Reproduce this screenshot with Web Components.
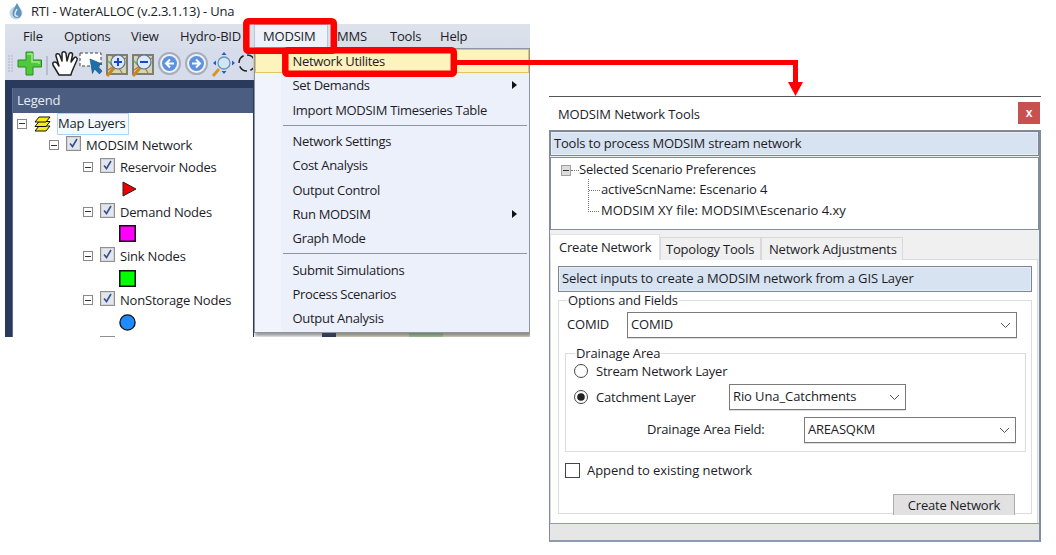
<!DOCTYPE html>
<html>
<head>
<meta charset="utf-8">
<title>RTI - WaterALLOC</title>
<style>
  html, body { margin: 0; background: #fff; }
  body { font: 13px "Open Sans", "Noto Sans", sans-serif; letter-spacing: -.2px; color: #1c1c28; }
  .desk { position: relative; width: 1056px; height: 555px; overflow: hidden; }
</style>
</head>
<body>
<div class="desk">
  <app-window></app-window>
  <tool-window></tool-window>
  <call-outs></call-outs>
</div>

<script>
/* small helper so each component only has to give its css and markup */
class Base extends HTMLElement {
  constructor(css, html) {
    super();
    const template = document.createElement('template');
    template.innerHTML = `<style>*{box-sizing:border-box}${css}</style>${html}`;
    this.attachShadow({ mode: 'open' }).appendChild(template.content.cloneNode(true));
  }
}

class MenuItem extends Base {
  constructor() {
    super(`
      :host { display:flex; align-items:center; height:24.3px; padding-left:38px; position:relative; white-space:nowrap; letter-spacing:-.3px; }
      :host([hot]) { background:#fdf3bd; outline:1px solid #e5c365; outline-offset:-1px; }
      :host([sub])::after { content:""; position:absolute; left:257px; top:8px; border-left:5px solid #111; border-top:4.5px solid transparent; border-bottom:4.5px solid transparent; }
    `, `<slot></slot>`);
  }
}
customElements.define('menu-item', MenuItem);

class MenuSep extends Base {
  constructor() {
    super(`:host { display:block; height:1px; margin:3px 2px 3px 28px; background:#8d95a3; }`, ``);
  }
}
customElements.define('menu-sep', MenuSep);

class TreeRow extends Base {
  constructor() {
    super(`
      :host { display:flex; align-items:center; height:22.2px; white-space:nowrap; position:relative; }
      .box { width:10px; height:10px; border:1px solid #888; background:#fff; position:relative; flex:none; }
      .box::after { content:""; position:absolute; left:1px; right:1px; top:3.5px; height:1px; background:#333; }
      .chk { width:15px; height:15px; flex:none; margin-left:7px; margin-right:5px; margin-top:-3px; }
    `, `<span class="box"></span>
      <svg class="chk" viewBox="0 0 15 15"><rect x=".5" y=".5" width="14" height="14" fill="#d5d5d8" stroke="#8f8f8f"/><rect x="2" y="2" width="11" height="11" fill="#e4e6ee"/><path d="M4 7.500l2.500 3L11 3" fill="none" stroke="#34508c" stroke-width="1.600"/></svg>
      <slot></slot>`);
  }
  connectedCallback() {
    this.style.paddingLeft = (this.getAttribute('indent') || 0) + 'px';
  }
}
customElements.define('tree-row', TreeRow);

class AppWindow extends Base {
  constructor() {
    super(`
      :host { position:absolute; left:0; top:0; width:530px; height:337px; display:flex; flex-direction:column; overflow:hidden; }
      .title { height:24px; display:flex; align-items:center; background:#fff; padding:0 0 2px 9px; gap:7px; white-space:nowrap; }
      .frame { flex:1; margin-left:5px; display:flex; flex-direction:column; position:relative; min-height:0; }
      .menubar { height:24px; display:flex; align-items:center; background:linear-gradient(#dde2eb,#d8deea); }
      .menubar span { white-space:nowrap; }
      .tools { height:32px; background:#d6dce9; display:flex; align-items:center; overflow:hidden; }
      .tools svg { display:block; flex:none; }
      .dark { flex:1; background:#2a3a5c; padding:8px 0 0 7px; min-height:0; }
      .legend { width:241px; height:100%; display:flex; flex-direction:column; background:#fff; border-left:1px solid #5b6c8c; }
      .lhead { height:25px; background:#4b5d80; color:#e8ecf4; display:flex; align-items:center; padding:0 0 2px 4px; flex:none; }
      .ltree { flex:1; overflow:hidden; }
      .row { display:flex; align-items:center; height:22.2px; position:relative; }
      .root { display:flex; align-items:center; height:21px; padding-left:4px; }
      .minus { width:10px; height:10px; border:1px solid #888; position:relative; flex:none; }
      .minus::after { content:""; position:absolute; left:1px; right:1px; top:3.5px; height:1px; background:#333; }
      .sel { margin-left:6px; border:1px solid #a8d8f4; background:#f2fafe; padding:0 0 1px 0; height:22px; display:flex; align-items:center; width:72px; white-space:nowrap; flex:none; }
      .sym { display:block; }
      .menu { position:absolute; left:248.5px; top:24px; width:276.5px; height:285px; border:1px solid #8d95a3; background:linear-gradient(90deg,#f1f4fd 26px,#ecf0fb 26px); box-shadow:1px 3px 3px rgba(70,70,70,.55); }
      .map { position:absolute; left:330px; top:309px; width:195px; height:4px; background:#e6dcc6; border-left:1px solid #333; }
      .map i { position:absolute; left:73px; top:0; width:34px; height:4px; background:#a8cfa0; }
      .stub { position:absolute; left:317px; top:309px; width:8px; height:4px; background:#2a3a5c; }
      .fill { position:absolute; left:248px; top:56px; width:277px; height:253px; background:#2a3a5c; }
      .blank { position:absolute; left:249px; top:309px; width:68px; height:4px; background:#fff; }
    `, `
      <div class="title">
        <svg width="15" height="17" viewBox="0 0 15 17"><circle cx="7" cy="10" r="6.500" fill="#c4d6e6"/><path d="M8 0C6 4 3.500 7 3.500 10.500a4.500 4.500 0 0 0 9 0C12.500 7 10 4 8 0z" fill="#5f93c0"/><path d="M8 6c-1 2-2 3-2 5a2 2 0 0 0 3 2" fill="none" stroke="#e4eef6" stroke-width="1.400"/></svg>
        <span>RTI - WaterALLOC (v.2.3.1.13) - Una</span>
      </div>
      <div class="frame">
        <div class="menubar">
          <span style="margin-left:18px;width:41px">File</span>
          <span style="width:67px">Options</span>
          <span style="width:49px">View</span>
          <span style="width:74px">Hydro-BID</span>
          <span style="width:74px;height:24px;line-height:24px;padding-left:9px;background:#eef3fb;outline:1px solid #b8c6dc;outline-offset:-1px">MODSIM</span>
          <span style="margin-left:9px;width:53px">MMS</span>
          <span style="width:50px">Tools</span>
          <span>Help</span>
        </div>
        <div class="tools">
          <svg width="248" height="32" viewBox="0 0 248 32">
            <g fill="#a9aeb8"><circle cx="4" cy="8" r=".8"/><circle cx="7" cy="8" r=".8"/><circle cx="4" cy="11" r=".8"/><circle cx="7" cy="11" r=".8"/><circle cx="4" cy="14" r=".8"/><circle cx="7" cy="14" r=".8"/><circle cx="4" cy="17" r=".8"/><circle cx="7" cy="17" r=".8"/><circle cx="4" cy="20" r=".8"/><circle cx="7" cy="20" r=".8"/><circle cx="4" cy="23" r=".8"/><circle cx="7" cy="23" r=".8"/></g>
            <path d="M21 4h7v8h8.500v7H28v8h-7v-8h-8v-7h8z" fill="#4fc83a" stroke="#2a8a24" stroke-width="1" stroke-linejoin="round"/>
            <path d="M22 6h5v8h7v2" fill="none" stroke="#a4ec8c" stroke-width="1.500"/>
            <path d="M42 8v19" stroke="#98a0ad"/>
            <path d="M54 27L48 17C47 14 50 13 52 15L54 18L51 8C50.500 5 54 5 55 7.500L57 13L57 5.500C57 3 60.500 3 61 5.500L62 13L64 6C64.500 4 68 4.500 67.500 7L66 14L69 10C70 8 73 9.500 72 12L68 21C67 24 66 25 66 27Z" fill="#fff" stroke="#222" stroke-width="1.500" stroke-linejoin="round"/>
            <rect x="75" y="5" width="21" height="13" fill="#fff"/>
            <rect x="75" y="5" width="21" height="13" fill="none" stroke="#444" stroke-dasharray="3 2"/>
            <path d="M85 11l12 5-4.500 2 4.500 5-2.500 3-5-5-2 4.500z" fill="#1e6fae" stroke="#0f4a80" stroke-width=".6"/>
            <rect x="101" y="6" width="22" height="21" fill="#7a7f78"/><rect x="103" y="8" width="18" height="17" fill="#d6d6a8"/>
            <path d="M103 22l18-12M107 8l10 17" stroke="#c86a58" stroke-width="1.200"/><path d="M103 13l6 6" stroke="#6fae60" stroke-width="1.500"/>
            <path d="M102 28l7-8" stroke="#c8861e" stroke-width="3"/>
            <circle cx="113" cy="14" r="7" fill="#dbe9fb" stroke="#5a7290" stroke-width="1.200"/><path d="M109 14h8M113 10v8" stroke="#1c46c4" stroke-width="2"/>
            <rect x="127" y="6" width="22" height="21" fill="#7a7f78"/><rect x="129" y="8" width="18" height="17" fill="#d6d6a8"/>
            <path d="M129 22l18-12M133 8l10 17" stroke="#c86a58" stroke-width="1.200"/><path d="M129 13l6 6" stroke="#6fae60" stroke-width="1.500"/>
            <path d="M128 28l7-8" stroke="#c8861e" stroke-width="3"/>
            <circle cx="139" cy="14" r="7" fill="#dbe9fb" stroke="#5a7290" stroke-width="1.200"/><path d="M135 14h8" stroke="#1c46c4" stroke-width="2"/>
            <circle cx="164.500" cy="15.500" r="10.500" fill="#eef1f6" stroke="#a6aebb" stroke-width="2"/><circle cx="164.500" cy="15.500" r="7.500" fill="#5f92dd"/>
            <path d="M169 15.500h-7M165 11.500l-4 4 4 4" fill="none" stroke="#fff" stroke-width="2"/>
            <circle cx="191.500" cy="15.500" r="10.500" fill="#eef1f6" stroke="#a6aebb" stroke-width="2"/><circle cx="191.500" cy="15.500" r="7.500" fill="#5f92dd"/>
            <path d="M187 15.500h7M191 11.500l4 4-4 4" fill="none" stroke="#fff" stroke-width="2"/>
            <path d="M208 28l6-7" stroke="#d8962a" stroke-width="3"/>
            <circle cx="219" cy="15" r="6" fill="#cfe6f6" stroke="#6f94b4" stroke-width="1.300"/>
            <path d="M219 4l-2.500 3h5zM219 26l-2.500-3h5zM208 15l3-2.500v5zM230 15l-3-2.500v5z" fill="#1c5fd0"/>
            <circle cx="242" cy="15" r="8" fill="none" stroke="#222" stroke-width="1.500" stroke-dasharray="9 3.500"/>
          </svg>
        </div>
        <div class="dark">
          <div class="legend">
            <div class="lhead">Legend</div>
            <div class="ltree">
              <div class="root">
                <span class="minus"></span>
                <svg style="margin-left:7px;flex:none" width="17" height="18" viewBox="0 0 17 18">
                  <path d="M1 16h11l4-5H5z" fill="#f6ee18" stroke="#111" stroke-linejoin="round"/>
                  <path d="M1 11.500h11l4-5H5z" fill="#f6ee18" stroke="#111" stroke-linejoin="round"/>
                  <path d="M1 7h11l4-5H5z" fill="#f6ee18" stroke="#111" stroke-linejoin="round"/>
                </svg>
                <span class="sel">Map Layers</span>
              </div>
              <tree-row indent="36">MODSIM Network</tree-row>
              <tree-row indent="70">Reservoir Nodes</tree-row>
              <div class="row" style="padding-left:109px"><svg class="sym" width="15" height="16" viewBox="0 0 15 16"><path d="M1 1l13 7-13 7z" fill="#ee0000" stroke="#222"/></svg></div>
              <tree-row indent="70">Demand Nodes</tree-row>
              <div class="row" style="padding-left:106px"><svg class="sym" width="17" height="17" viewBox="0 0 17 17"><rect x=".75" y=".75" width="15.500" height="15.500" fill="#ff00ff" stroke="#111" stroke-width="1.500"/></svg></div>
              <tree-row indent="70">Sink Nodes</tree-row>
              <div class="row" style="padding-left:106px"><svg class="sym" width="17" height="17" viewBox="0 0 17 17"><rect x=".75" y=".75" width="15.500" height="15.500" fill="#00ff00" stroke="#111" stroke-width="1.500"/></svg></div>
              <tree-row indent="70">NonStorage Nodes</tree-row>
              <div class="row" style="padding-left:106px"><svg class="sym" width="17" height="17" viewBox="0 0 17 17"><circle cx="8.500" cy="8.500" r="7.600" fill="#1e8cff" stroke="#111" stroke-width="1.300"/></svg></div>
              <tree-row indent="70"></tree-row>
            </div>
          </div>
        </div>
        <div class="fill"></div>
        <div class="blank"></div>
        <div class="stub"></div>
        <div class="map"><i></i></div>
        <div class="menu">
          <menu-item hot>Network Utilites</menu-item>
          <menu-item sub>Set Demands</menu-item>
          <menu-item>Import MODSIM Timeseries Table</menu-item>
          <menu-sep></menu-sep>
          <menu-item>Network Settings</menu-item>
          <menu-item>Cost Analysis</menu-item>
          <menu-item>Output Control</menu-item>
          <menu-item sub>Run MODSIM</menu-item>
          <menu-item>Graph Mode</menu-item>
          <menu-sep></menu-sep>
          <menu-item>Submit Simulations</menu-item>
          <menu-item>Process Scenarios</menu-item>
          <menu-item>Output Analysis</menu-item>
        </div>
      </div>
    `);
  }
}
customElements.define('app-window', AppWindow);

class WinCombo extends Base {
  constructor() {
    super(`
      :host { display:flex; align-items:center; height:26px; background:#fff; border:1px solid #7a7a7a; padding:0 0 2px 3px; position:relative; flex:none; box-shadow:0 1px 0 #ddd; }
      svg { position:absolute; right:5px; top:9px; }
    `, `<slot></slot><svg width="11" height="7" viewBox="0 0 11 7"><path d="M1 1l4.500 4.500L10 1" fill="none" stroke="#555" stroke-width="1"/></svg>`);
  }
}
customElements.define('win-combo', WinCombo);

class WinRadio extends Base {
  constructor() {
    super(`
      :host { display:flex; align-items:center; gap:8px; white-space:nowrap; height:20px; }
      svg { flex:none; }
    `, `<svg width="14" height="14" viewBox="0 0 14 14"><circle cx="7" cy="7" r="6.500" fill="#fff" stroke="#444"/><circle id="dot" cx="7" cy="7" r="3.800" fill="#222" visibility="hidden"/></svg><slot></slot>`);
  }
  connectedCallback() {
    if (this.hasAttribute('checked')) this.shadowRoot.getElementById('dot').setAttribute('visibility', 'visible');
  }
}
customElements.define('win-radio', WinRadio);

class InfoBar extends Base {
  constructor() {
    super(`
      :host { display:flex; align-items:center; background:#d7e3f1; border:1px solid #7d8590; box-shadow:inset 0 0 0 1px #e8eef6; padding:0 0 2px 3px; white-space:nowrap; }
    `, `<slot></slot>`);
  }
}
customElements.define('info-bar', InfoBar);

class ToolWindow extends Base {
  constructor() {
    super(`
      :host { position:absolute; left:549px; top:96px; width:492px; height:445px; display:flex; flex-direction:column; background:#fff; border-top:1px solid #555; }
      .title { height:33px; display:flex; align-items:center; justify-content:space-between; padding-left:9px; flex:none; letter-spacing:-.13px; }
      .close { width:22px; height:22px; background:#c75050; color:#fff; font:bold 12px "Liberation Sans",sans-serif; display:flex; align-items:center; justify-content:center; margin-right:1px; margin-top:-1px; }
      .body { flex:1; display:flex; flex-direction:column; border:1px solid #828c9e; border-bottom:2px solid #8f9ab0; border-right-width:2px; min-height:0; background:#f0f0f0; }
      .top { height:25px; flex:none; }
      .scn { height:73px; flex:none; background:#fff; border:1px solid #828c9e; margin-top:1px; padding:1px 0 0 10px; position:relative; }
      .scn div { height:20.300px; display:flex; align-items:center; white-space:nowrap; }
      .scn .kid { padding-left:40px; }
      .pm { position:absolute; left:10px; top:7px; width:10px; height:11px; background:#dcdcdc; border:1px solid #a0a0a0; }
      .pm::after { content:""; position:absolute; left:1px; right:1px; top:4px; height:1px; background:#333; }
      .dots { position:absolute; left:37px; top:21px; width:11px; height:33px; border-left:1px dotted #777; border-bottom:1px dotted #777; }
      .dots::after { content:""; position:absolute; left:0; top:11px; width:11px; border-top:1px dotted #777; }
      .dot0 { position:absolute; left:20px; top:12px; width:8px; border-top:1px dotted #777; }
      .tabs { flex:1; display:flex; flex-direction:column; padding:4px 0 0 0; min-height:0; }
      .strip { display:flex; align-items:flex-end; height:26px; flex:none; position:relative; z-index:1; }
      .tab { height:23px; border:1px solid #d9d9d9; border-bottom:0; padding:0 0 1px 5px; background:#f0f0f0; display:flex; align-items:center; white-space:nowrap; }
      .tab.on { height:26px; background:#fff; padding-left:8px; width:110px; border-color:#e2e2e2; }
      .page { height:265px; flex:none; background:#fff; border:1px solid #d9d9d9; margin-top:-1px; margin-right:1px; padding:6px 5px 0 7px; overflow:hidden; }
      .page info-bar { height:26px; letter-spacing:-.13px; }
      fieldset { margin:0; padding:0; border:1px solid #dcdcdc; min-width:0; }
      legend { padding:0 1px; margin-left:8px; line-height:17px; letter-spacing:-.15px; }
      .opts { height:222px; }
      .line { display:flex; align-items:center; }
      .drain { margin:7px 5px 0 6px; height:107px; padding:0 0 0 8px; }
      .drain legend { margin-left:1px; }
      .chk { display:flex; align-items:center; gap:7px; margin:9px 0 0 6px; height:18px; letter-spacing:-.05px; }
      .chk i { width:15px; height:15px; border:1px solid #444; display:block; background:#fff; }
      .btn { width:122px; height:21px; margin:15px 0 0 334px; background:#e1e1e1; border:1px solid #adadad; border-bottom:0; padding-bottom:1px; display:flex; align-items:center; justify-content:center; position:relative; }
      .status { height:17px; flex:none; background:#e6e6e6; border-top:1px solid #8f9ab0; }
    `, `
      <div class="title"><span>MODSIM Network Tools</span><span class="close">x</span></div>
      <div class="body">
        <info-bar class="top">Tools to process MODSIM stream network</info-bar>
        <div class="scn">
          <span class="pm"></span><span class="dot0"></span><span class="dots"></span>
          <div style="padding-left:18px">Selected Scenario Preferences</div>
          <div class="kid" style="letter-spacing:-.1px">activeScnName: Escenario 4</div>
          <div class="kid" style="letter-spacing:0">MODSIM XY file: MODSIM\\Escenario 4.xy</div>
        </div>
        <div class="tabs">
          <div class="strip">
            <span class="tab on">Create Network</span>
            <span class="tab" style="width:101px">Topology Tools</span>
            <span class="tab" style="width:142px;padding-left:7px">Network Adjustments</span>
          </div>
          <div class="page">
            <info-bar>Select inputs to create a MODSIM network from a GIS Layer</info-bar>
            <fieldset class="opts">
              <legend>Options and Fields</legend>
              <div class="line" style="margin-top:3px;padding-left:8px">
                <span style="width:60px;padding-bottom:2px">COMID</span>
                <win-combo style="width:390px">COMID</win-combo>
              </div>
              <fieldset class="drain">
                <legend>Drainage Area</legend>
                <win-radio style="margin-top:-1px">Stream Network Layer</win-radio>
                <div class="line" style="margin-top:3px">
                  <win-radio checked style="width:155px">Catchment Layer</win-radio>
                  <win-combo style="width:177px;letter-spacing:-.1px">Rio Una_Catchments</win-combo>
                </div>
                <div class="line" style="margin-top:7px;padding-left:73px">
                  <span style="width:157px;padding-bottom:2px">Drainage Area Field:</span>
                  <win-combo style="width:212px">AREASQKM</win-combo>
                </div>
              </fieldset>
              <div class="chk"><i></i><span>Append to existing network</span></div>
              <div class="btn">Create Network</div>
            </fieldset>
          </div>
        </div>
        <div class="status"></div>
      </div>
    `);
  }
}
customElements.define('tool-window', ToolWindow);

class CallOuts extends Base {
  constructor() {
    super(`:host { position:absolute; inset:0; pointer-events:none; } svg { display:block; }`, `
      <svg width="1056" height="555" viewBox="0 0 1056 555">
        <g fill="none" stroke="#f00" stroke-width="6.500">
          <rect x="246.300" y="21.300" width="87.500" height="29.500" rx="2"/>
          <rect x="285.300" y="50.300" width="168.500" height="23.500" rx="2"/>
        </g>
        <path d="M454 62.500h341.500V84" fill="none" stroke="#f00" stroke-width="5"/>
        <path d="M788 82h15l-7.500 14z" fill="#f00"/>
      </svg>`);
  }
}
customElements.define('call-outs', CallOuts);
</script>
</body>
</html>
